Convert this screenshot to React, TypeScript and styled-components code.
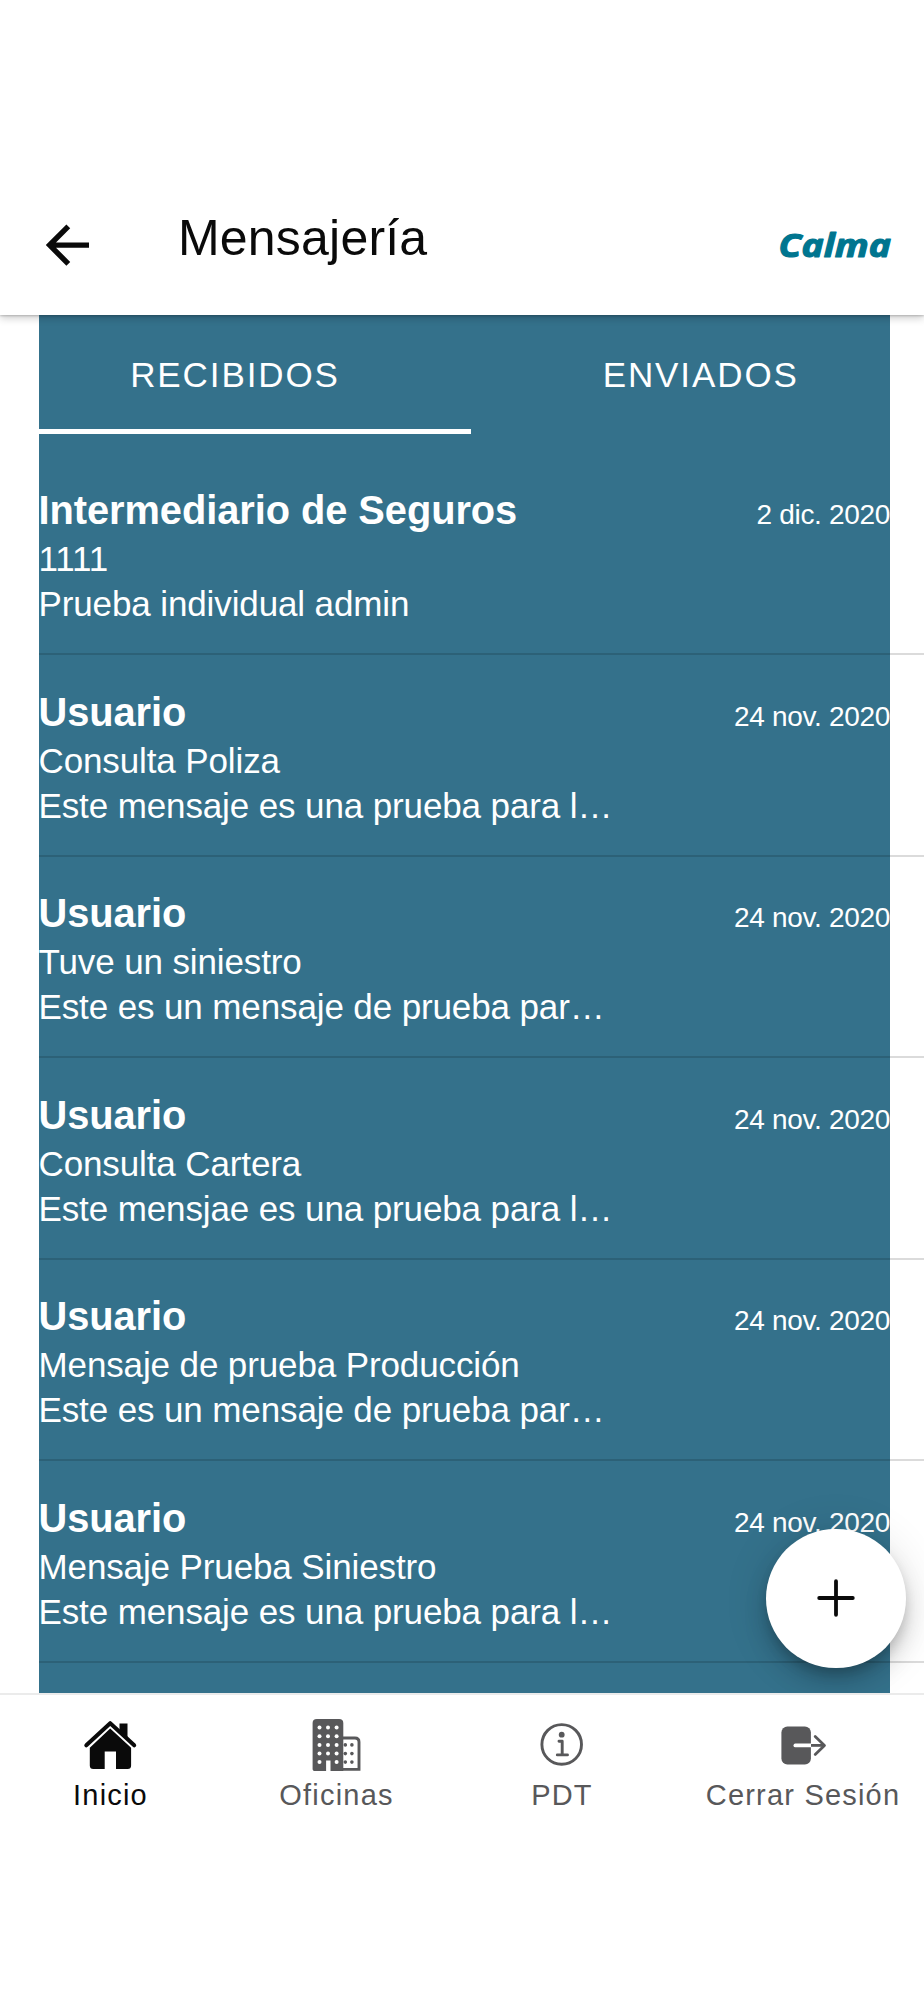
import React from "react";
import styled, { createGlobalStyle } from "styled-components";

const GlobalStyle = createGlobalStyle`
  *, *::before, *::after { box-sizing: border-box; }
  body {
    margin: 0;
    background: #fff;
    font-family: "Liberation Sans", Arial, sans-serif;
    color: #0a0a0a;
  }
`;

const Screen = styled.div`
  display: flex;
  flex-direction: column;
  width: 924px;
  height: 2000px;
  overflow: hidden;
  background: #fff;
`;

const Header = styled.header`
  position: relative;
  z-index: 2;
  flex: none;
  display: flex;
  align-items: flex-start;
  height: 315px;
  padding: 207px 32px 0 44px;
  background: #fff;
  box-shadow: 0 1px 2px rgba(0, 0, 0, 0.2), 0 3px 8px rgba(0, 0, 0, 0.2);
`;

const BackButton = styled.button`
  margin: 16px 0 0;
  padding: 0;
  border: 0;
  background: none;
  line-height: 0;
`;

const Title = styled.h1`
  flex: 1;
  margin: 1px 0 0 86px;
  font-size: 50px;
  font-weight: 400;
  line-height: 61px;
  letter-spacing: 0.2px;
`;

const Brand = styled.svg`
  flex: none;
  margin-top: 18px;
  overflow: visible;
`;

const Content = styled.main`
  position: relative;
  flex: none;
  height: 1378px;
  padding-left: 38.5px;
  overflow: hidden;
`;

const Panel = styled.div`
  width: 851.5px;
  height: 100%;
  background: #34718b;
  color: #fff;
`;

const Tabs = styled.div`
  display: flex;
  height: 138.7px;
`;

const Tab = styled.div<{ $active?: boolean }>`
  width: ${(p) => (p.$active ? 432 : 419.5)}px;
  height: 119px;
  padding: ${(p) => (p.$active ? "42px 39px 0 0" : "42px 0 0 41px")};
  border-bottom: 5px solid ${(p) => (p.$active ? "#fff" : "transparent")};
  font-size: 35px;
  line-height: 36px;
  letter-spacing: 1.9px;
  text-align: center;
`;

const Row = styled.article`
  width: 885.5px;
  height: 201.55px;
  padding: 32.5px 34px 0 0;
  border-bottom: 2px solid rgba(0, 0, 0, 0.14);
`;

const RowHead = styled.div`
  display: flex;
  justify-content: space-between;
  align-items: baseline;
  height: 50px;
  line-height: 48px;
`;

const Sender = styled.h2`
  margin: 0;
  font-size: 39.8px;
  font-weight: 700;
  letter-spacing: -0.05px;
`;

const SentDate = styled.time`
  font-size: 28px;
  letter-spacing: -0.32px;
`;

const Line = styled.p`
  margin: 0;
  font-size: 35px;
  line-height: 45px;
  letter-spacing: -0.12px;
  white-space: nowrap;
`;

const Fab = styled.button`
  position: absolute;
  left: 766.4px;
  top: 1213.6px;
  display: flex;
  align-items: center;
  justify-content: center;
  width: 139.4px;
  height: 139.4px;
  padding: 0;
  border: 0;
  border-radius: 50%;
  background: #fff;
  box-shadow: 0 8px 13px -3px rgba(0, 0, 0, 0.2), 0 15px 25px rgba(0, 0, 0, 0.14),
    0 3px 46px rgba(0, 0, 0, 0.12);
`;

const Nav = styled.nav`
  flex: none;
  display: grid;
  grid-template-columns: 221px 231px 220px 252px;
  height: 140px;
  border-top: 2px solid #ebebeb;
  background: #fff;
`;

const NavItem = styled.a<{ $active?: boolean; $shift?: number }>`
  display: flex;
  flex-direction: column;
  align-items: center;
  padding: 21.5px 0 0 ${(p) => p.$shift || 0}px;
  color: ${(p) => (p.$active ? "#0a0a0a" : "#58585a")};
  font-size: 29px;
  line-height: 32px;
  letter-spacing: 1.2px;
  white-space: nowrap;
`;

const NavIcon = styled.svg`
  flex: none;
  margin-bottom: 6.5px;
`;

const messages = [
  { from: "Intermediario de Seguros", date: "2 dic. 2020", subject: "1111", body: "Prueba individual admin" },
  { from: "Usuario", date: "24 nov. 2020", subject: "Consulta Poliza", body: "Este mensaje es una prueba para l…" },
  { from: "Usuario", date: "24 nov. 2020", subject: "Tuve un siniestro", body: "Este es un mensaje de prueba par…" },
  { from: "Usuario", date: "24 nov. 2020", subject: "Consulta Cartera", body: "Este mensjae es una prueba para l…" },
  { from: "Usuario", date: "24 nov. 2020", subject: "Mensaje de prueba Producción", body: "Este es un mensaje de prueba par…" },
  { from: "Usuario", date: "24 nov. 2020", subject: "Mensaje Prueba Siniestro", body: "Este mensaje es una prueba para l…" },
];

const HomeIcon = () => (
  <NavIcon width="56" height="56" viewBox="82.7 1717 56 56">
    <path d="M119.2 1723.5h8v16l-8-8z" fill="#0a0a0a" />
    <path d="M86 1745.3 109.9 1723.2 133.9 1745.3" fill="none" stroke="#0a0a0a" strokeWidth="4" strokeLinecap="round" strokeLinejoin="round" />
    <path d="M109.9 1728.6 130.8 1747.8V1765.5q0 3.5-3.5 3.5H115.7V1751.6H104.4V1769H93q-3.5 0-3.5-3.5V1747.8z" fill="#0a0a0a" />
  </NavIcon>
);

const OfficeIcon = () => (
  <NavIcon width="56" height="56" viewBox="308.7 1717.4 56 56">
    <path d="M316.5 1719.3h22.3q4.2 0 4.2 4.2V1771.3H330.2V1761h-4.4v10.3H314q-1.7 0-1.7-1.7V1723.5q0-4.2 4.2-4.2z" fill="currentColor" />
    {[1728, 1736.7, 1745.3, 1754, 1762.5].map((y, i) =>
      [319.2, 327.7, 336.3].map((x) => (i === 4 && x === 327.7 ? null : <circle key={`${x}-${y}`} cx={x} cy={y} r="2" fill="#fff" />))
    )}
    <path d="M342 1738.4h12.6q4.1 0 4.1 4.1V1769.8H342" fill="none" stroke="currentColor" strokeWidth="2.9" />
    {[1745.3, 1754, 1762.5].map((y) =>
      [345, 351.6].map((x) => <circle key={`${x}-${y}`} cx={x} cy={y} r="1.8" fill="currentColor" />)
    )}
  </NavIcon>
);

const InfoIcon = () => (
  <NavIcon width="56" height="56" viewBox="534 1717 56 56" fill="none" stroke="currentColor" strokeWidth="2.9" strokeLinecap="round" strokeLinejoin="round">
    <circle cx="561.7" cy="1744.4" r="19.8" />
    <circle cx="561.7" cy="1734.7" r="2.9" fill="currentColor" stroke="none" />
    <path d="M559 1741.3h3.2v13.5M557.3 1754.9h10.2" />
  </NavIcon>
);

const ExitIcon = () => (
  <NavIcon width="56" height="56" viewBox="775 1717 56 56" fill="none" strokeLinecap="round" strokeLinejoin="round">
    <rect x="781.4" y="1726.4" width="29.5" height="38" rx="6" fill="currentColor" />
    <path d="M795.4 1745.4H811" stroke="#fff" strokeWidth="3.8" />
    <path d="M811 1745.4H824.5" stroke="currentColor" strokeWidth="2.8" strokeLinecap="butt" />
    <path d="M815.2 1736.5 824.5 1745.4 815.2 1754.4" stroke="currentColor" strokeWidth="2.8" />
  </NavIcon>
);

export default function App() {
  return (
    <Screen>
      <GlobalStyle />
      <Header>
        <BackButton aria-label="Volver">
          <svg width="48" height="44" viewBox="44 223 48 44" fill="none" stroke="#0a0a0a" strokeWidth="5.4">
            <path d="M68.3 226.4 49.6 245.1 68.3 263.8M50 245.1H89" />
          </svg>
        </BackButton>
        <Title>Mensajería</Title>
        <Brand width="114" height="40" viewBox="0 0 114 40" role="img" aria-label="Calma">
          <text
            x="0.5"
            y="32"
            fill="#00758f"
            stroke="#00758f"
            strokeWidth="1.1"
            strokeLinejoin="round"
            fontFamily="Open Sans, sans-serif"
            fontSize="32"
            fontWeight="700"
            fontStyle="italic"
            textLength="112.5"
            lengthAdjust="spacingAndGlyphs"
          >
            Calma
          </text>
        </Brand>
      </Header>
      <Content>
        <Panel>
          <Tabs>
            <Tab $active>RECIBIDOS</Tab>
            <Tab>ENVIADOS</Tab>
          </Tabs>
          {messages.map((m, i) => (
            <Row key={i}>
              <RowHead>
                <Sender>{m.from}</Sender>
                <SentDate>{m.date}</SentDate>
              </RowHead>
              <Line>{m.subject}</Line>
              <Line>{m.body}</Line>
            </Row>
          ))}
        </Panel>
        <Fab aria-label="Nuevo mensaje">
          <svg width="40" height="40" viewBox="0 0 40 40" stroke="#0a0a0a" strokeWidth="3.8" strokeLinecap="round">
            <path d="M20 3.2V36.8M3.2 20H36.8" />
          </svg>
        </Fab>
      </Content>
      <Nav>
        <NavItem $active><HomeIcon />Inicio</NavItem>
        <NavItem><OfficeIcon />Oficinas</NavItem>
        <NavItem><InfoIcon />PDT</NavItem>
        <NavItem $shift={10}><ExitIcon />Cerrar Sesión</NavItem>
      </Nav>
    </Screen>
  );
}
